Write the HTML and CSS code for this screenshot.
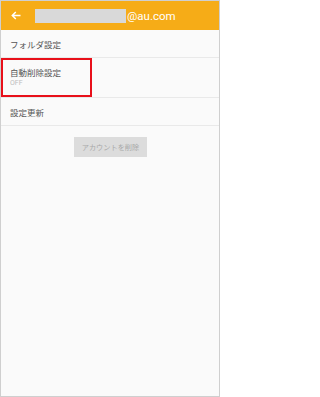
FILE: index.html
```html
<!DOCTYPE html>
<html lang="ja">
<head>
<meta charset="utf-8">
<link rel="stylesheet" href="styles.css">
</head>
<body>
<div class="screen">
  <header class="bar">
    <svg class="back" width="10" height="9" viewBox="0 0 10 9"><path d="M9.5 4.5H1.5M4.8 1L1.3 4.5 4.8 8" fill="none" stroke="#fff" stroke-width="1.5"/></svg>
    <span class="mask"></span>
    <span class="addr">@au.com</span>
  </header>
  <div class="row">フォルダ設定</div>
  <div class="row tall">
    <div class="title">自動削除設定</div>
    <div class="sub">OFF</div>
    <span class="hl"></span>
  </div>
  <div class="row">設定更新</div>
  <div class="actions"><button class="btn">アカウントを削除</button></div>
</div>
</body>
</html>
```

FILE: styles.css
```css
html, body { margin: 0; padding: 0; }
body { width: 220px; height: 397px; font-family: "Noto Sans CJK JP", "Roboto", sans-serif; }
.screen { box-sizing: border-box; width: 220px; height: 397px; border: 1px solid #cfcfcf; background: #fafafa; }
.bar { height: 29px; background: #f6ac17; display: flex; align-items: center; padding-left: 10px; }
.back { display: block; }
.mask { width: 91px; height: 14px; background: #d9d9d9; margin-left: 14px; }
.addr { color: #fff; font-family: "Roboto", sans-serif; font-size: 11.5px; font-weight: 400; margin-left: 1px; }
.row { position: relative; height: 27px; border-bottom: 1px solid #e9e9e9; display: flex; flex-direction: column; justify-content: center; padding-left: 9px; font-size: 8.5px; color: #555; }
.row.tall { height: 39px; }
.title { line-height: 11px; }
.sub { font-family: "Roboto", sans-serif; font-size: 7px; color: #bdbdbd; line-height: 9px; margin-top: 1px; }
.hl { position: absolute; left: 0; top: 0; width: 91px; height: 39px; box-sizing: border-box; border: 2px solid #e8101a; }
.actions { display: flex; justify-content: center; padding-top: 11px; }
.btn { width: 73px; height: 20px; border: none; background: #dcdcdc; color: #a9a9a9; font-family: "Noto Sans CJK JP", sans-serif; font-size: 7.2px; padding: 0; margin-left: 1px; }
```
